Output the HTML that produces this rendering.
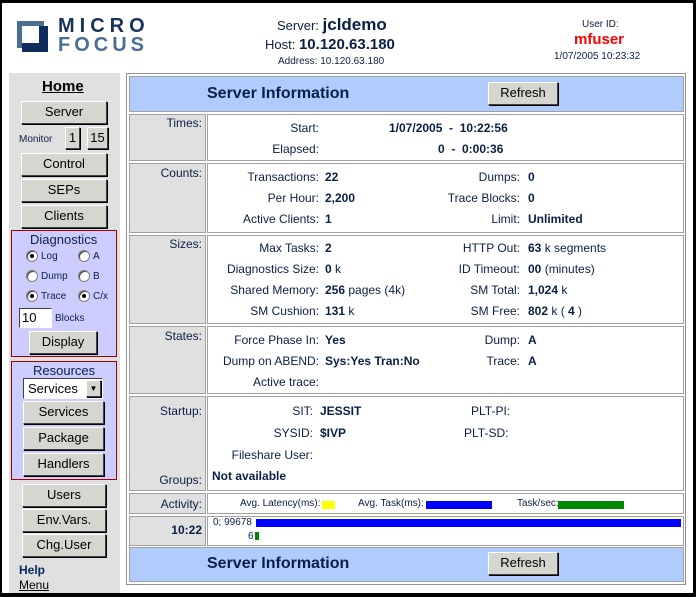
<!DOCTYPE html>
<html><head><meta charset="utf-8"><style>
*{margin:0;padding:0;box-sizing:border-box}
body{width:696px;height:597px;background:#000;position:relative;overflow:hidden;font-family:"Liberation Sans",Arial,sans-serif;color:#0a1f44;font-size:12px}
.pg{position:absolute;left:2px;top:3px;width:691px;height:590px;background:#fff}
.a{position:absolute;white-space:nowrap;line-height:14px}
.r{text-align:right}
.b{font-weight:bold}
.box{position:absolute}
.btn{position:absolute;background:#d6d6d0;border:1px solid;border-color:#fff #404040 #404040 #fff;box-shadow:1px 1px 0 #000;font-size:13px;color:#000;text-align:center;line-height:20px}
.lab{position:absolute;background:#e0e0e0;border:1px solid #a0a0a0}
.val{position:absolute;background:#fff;border:1px solid #a0a0a0}
.rad{position:absolute;width:12px;height:12px;border-radius:50%;background:#fff;border:1px solid #808080;box-shadow:inset 1px 1px 0 #404040}
.rad.on:after{content:"";position:absolute;left:3px;top:3px;width:4px;height:4px;background:#000;border-radius:50%}
.sm{font-size:10px}
</style></head><body>
<div class="pg"></div>
<!-- logo -->
<div class="box" style="left:17px;top:21px;width:27px;height:27px;background:#4a6f92"></div>
<div class="box" style="left:22px;top:26px;width:26px;height:26px;background:#0d2d5a"></div>
<div class="box" style="left:22px;top:26px;width:17px;height:17px;background:#fff"></div>
<div class="a b" style="left:58px;top:16px;font-size:20px;line-height:20px;letter-spacing:5px;color:#17335c">MICRO</div>
<div class="a b" style="left:58px;top:35px;font-size:20px;line-height:20px;letter-spacing:4px;color:#4a6f92">FOCUS</div>
<!-- header center -->
<div class="a" style="left:277px;top:16px;font-size:13px;line-height:18px">Server: <b style="font-size:17px">jcldemo</b></div>
<div class="a" style="left:265px;top:36px;font-size:13px;line-height:18px">Host: <b style="font-size:15px">10.120.63.180</b></div>
<div class="a sm" style="left:278px;top:55px">Address: 10.120.63.180</div>
<div class="a sm" style="left:582px;top:18px">User ID:</div>
<div class="a b" style="left:574px;top:31px;font-size:15px;line-height:18px;color:#f00">mfuser</div>
<div class="a sm" style="left:554px;top:50px">1/07/2005 10:23:32</div>
<!-- sidebar -->
<div class="box" style="left:9px;top:73px;width:111px;height:520px;background:#e0e0e0"></div>
<div class="a b" style="left:42px;top:78px;font-size:15px;line-height:18px;text-decoration:underline;color:#000">Home</div>
<div class="btn" style="left:21px;top:101px;width:86px;height:23px">Server</div>
<div class="a" style="left:19px;top:133px;font-size:10px">Monitor</div>
<div class="btn" style="left:65px;top:127px;width:15px;height:22px">1</div>
<div class="btn" style="left:87px;top:127px;width:21px;height:22px">15</div>
<div class="btn" style="left:21px;top:153px;width:86px;height:23px">Control</div>
<div class="btn" style="left:21px;top:179px;width:86px;height:23px">SEPs</div>
<div class="btn" style="left:21px;top:205px;width:86px;height:23px">Clients</div>
<div class="box" style="left:11px;top:230px;width:106px;height:127px;background:#ccccff;border:1px solid #a00000"></div>
<div class="a" style="left:30px;top:233px;font-size:13px">Diagnostics</div>
<div class="rad on" style="left:26px;top:250px"></div><div class="a sm" style="left:41px;top:250px">Log</div>
<div class="rad" style="left:78px;top:250px"></div><div class="a sm" style="left:93px;top:250px">A</div>
<div class="rad" style="left:26px;top:270px"></div><div class="a sm" style="left:41px;top:270px">Dump</div>
<div class="rad" style="left:78px;top:270px"></div><div class="a sm" style="left:93px;top:270px">B</div>
<div class="rad on" style="left:26px;top:290px"></div><div class="a sm" style="left:41px;top:290px">Trace</div>
<div class="rad on" style="left:78px;top:290px"></div><div class="a sm" style="left:93px;top:290px">C/x</div>
<div class="box" style="left:19px;top:308px;width:33px;height:20px;background:#fff;border:1px solid;border-color:#404040 #fff #fff #404040;font-size:13px;line-height:18px;padding-left:2px;color:#000">10</div>
<div class="a sm" style="left:55px;top:312px">Blocks</div>
<div class="btn" style="left:29px;top:331px;width:68px;height:23px">Display</div>
<div class="box" style="left:11px;top:361px;width:106px;height:119px;background:#ccccff;border:1px solid #a00000"></div>
<div class="a" style="left:33px;top:364px;font-size:13px">Resources</div>
<div class="box" style="left:23px;top:378px;width:80px;height:21px;background:#fff;border:1px solid;border-color:#404040 #fff #fff #404040;font-size:13px;line-height:19px;padding-left:4px;color:#000">Services</div>
<div class="btn" style="left:86px;top:380px;width:15px;height:17px;font-size:8px;line-height:15px">▼</div>
<div class="btn" style="left:23px;top:401px;width:81px;height:23px">Services</div>
<div class="btn" style="left:23px;top:427px;width:81px;height:23px">Package</div>
<div class="btn" style="left:23px;top:453px;width:81px;height:23px">Handlers</div>
<div class="btn" style="left:22px;top:484px;width:84px;height:23px">Users</div>
<div class="btn" style="left:22px;top:509px;width:84px;height:23px">Env.Vars.</div>
<div class="btn" style="left:22px;top:534px;width:84px;height:23px">Chg.User</div>
<div class="a b" style="left:19px;top:563px;color:#0a2a66">Help</div>
<div class="a" style="left:19px;top:578px;text-decoration:underline;color:#000">Menu</div>
<!-- main -->
<div class="box" style="left:126px;top:73px;width:560px;height:512px;border:1px solid #909090;background:#fff"></div>
<div class="box" style="left:129px;top:76px;width:555px;height:36px;background:#b0ccff;border:1px solid #a0a0a0"></div>
<div class="a b" style="left:207px;top:85px;font-size:16px;line-height:18px">Server Information</div>
<div class="btn" style="left:488px;top:82px;width:70px;height:23px">Refresh</div>
<!-- rows -->
<div class="lab" style="left:129px;top:114px;width:77px;height:47px"></div><div class="val" style="left:207px;top:114px;width:477px;height:47px"></div>
<div class="lab" style="left:129px;top:163px;width:77px;height:70px"></div><div class="val" style="left:207px;top:163px;width:477px;height:70px"></div>
<div class="lab" style="left:129px;top:235px;width:77px;height:89px"></div><div class="val" style="left:207px;top:235px;width:477px;height:89px"></div>
<div class="lab" style="left:129px;top:326px;width:77px;height:68px"></div><div class="val" style="left:207px;top:326px;width:477px;height:68px"></div>
<div class="lab" style="left:129px;top:396px;width:77px;height:95px"></div><div class="val" style="left:207px;top:396px;width:477px;height:95px"></div>
<div class="lab" style="left:129px;top:493px;width:77px;height:21px"></div><div class="val" style="left:207px;top:493px;width:477px;height:21px"></div>
<div class="lab" style="left:129px;top:516px;width:77px;height:30px"></div><div class="val" style="left:207px;top:516px;width:477px;height:30px"></div>
<div class="box" style="left:129px;top:547px;width:555px;height:35px;background:#b0ccff;border:1px solid #a0a0a0"></div>
<div class="a b" style="left:207px;top:555px;font-size:16px;line-height:18px">Server Information</div>
<div class="btn" style="left:488px;top:552px;width:70px;height:23px">Refresh</div>
<!-- labels -->
<div class="a r" style="left:130px;width:72px;top:116px">Times:</div>
<div class="a r" style="left:130px;width:72px;top:166px">Counts:</div>
<div class="a r" style="left:130px;width:72px;top:237px">Sizes:</div>
<div class="a r" style="left:130px;width:72px;top:329px">States:</div>
<div class="a r" style="left:130px;width:72px;top:404px">Startup:</div>
<div class="a r" style="left:130px;width:72px;top:473px">Groups:</div>
<div class="a r" style="left:130px;width:72px;top:497px">Activity:</div>
<div class="a r b" style="left:130px;width:72px;top:523px">10:22</div>
<!-- values -->
<div class="a r" style="left:200px;width:119px;top:121px">Start:</div>
<div class="a b" style="left:389px;top:121px">1/07/2005 &nbsp;- &nbsp;10:22:56</div>
<div class="a r" style="left:200px;width:119px;top:142px">Elapsed:</div>
<div class="a b" style="left:438px;top:142px">0 &nbsp;- &nbsp;0:00:36</div>

<div class="a r" style="left:200px;width:119px;top:170px">Transactions:</div><div class="a b" style="left:325px;top:170px">22</div>
<div class="a r" style="left:400px;width:120px;top:170px">Dumps:</div><div class="a b" style="left:528px;top:170px">0</div>
<div class="a r" style="left:200px;width:119px;top:191px">Per Hour:</div><div class="a b" style="left:325px;top:191px">2,200</div>
<div class="a r" style="left:400px;width:120px;top:191px">Trace Blocks:</div><div class="a b" style="left:528px;top:191px">0</div>
<div class="a r" style="left:200px;width:119px;top:212px">Active Clients:</div><div class="a b" style="left:325px;top:212px">1</div>
<div class="a r" style="left:400px;width:120px;top:212px">Limit:</div><div class="a b" style="left:528px;top:212px">Unlimited</div>

<div class="a r" style="left:200px;width:119px;top:241px">Max Tasks:</div><div class="a" style="left:325px;top:241px"><b>2</b></div>
<div class="a r" style="left:400px;width:120px;top:241px">HTTP Out:</div><div class="a" style="left:528px;top:241px"><b>63</b> k segments</div>
<div class="a r" style="left:200px;width:119px;top:262px">Diagnostics Size:</div><div class="a" style="left:325px;top:262px"><b>0</b> k</div>
<div class="a r" style="left:400px;width:120px;top:262px">ID Timeout:</div><div class="a" style="left:528px;top:262px"><b>00</b> (minutes)</div>
<div class="a r" style="left:200px;width:119px;top:283px">Shared Memory:</div><div class="a" style="left:325px;top:283px"><b>256</b> pages (4k)</div>
<div class="a r" style="left:400px;width:120px;top:283px">SM Total:</div><div class="a" style="left:528px;top:283px"><b>1,024</b> k</div>
<div class="a r" style="left:200px;width:119px;top:304px">SM Cushion:</div><div class="a" style="left:325px;top:304px"><b>131</b> k</div>
<div class="a r" style="left:400px;width:120px;top:304px">SM Free:</div><div class="a" style="left:528px;top:304px"><b>802</b> k ( <b>4</b> )</div>

<div class="a r" style="left:200px;width:119px;top:333px">Force Phase In:</div><div class="a b" style="left:325px;top:333px">Yes</div>
<div class="a r" style="left:400px;width:120px;top:333px">Dump:</div><div class="a b" style="left:528px;top:333px">A</div>
<div class="a r" style="left:200px;width:119px;top:354px">Dump on ABEND:</div><div class="a b" style="left:325px;top:354px">Sys:Yes Tran:No</div>
<div class="a r" style="left:400px;width:120px;top:354px">Trace:</div><div class="a b" style="left:528px;top:354px">A</div>
<div class="a r" style="left:200px;width:119px;top:375px">Active trace:</div>

<div class="a r" style="left:200px;width:113px;top:404px">SIT:</div><div class="a b" style="left:320px;top:404px">JESSIT</div>
<div class="a" style="left:471px;top:404px">PLT-PI:</div>
<div class="a r" style="left:200px;width:113px;top:426px">SYSID:</div><div class="a b" style="left:320px;top:426px">$IVP</div>
<div class="a" style="left:464px;top:426px">PLT-SD:</div>
<div class="a r" style="left:200px;width:113px;top:448px">Fileshare User:</div>
<div class="a b" style="left:212px;top:469px">Not available</div>

<div class="a sm" style="left:240px;top:497px">Avg. Latency(ms):</div>
<div class="box" style="left:322px;top:501px;width:13px;height:8px;background:#ff0"></div>
<div class="a sm" style="left:358px;top:497px">Avg. Task(ms):</div>
<div class="box" style="left:426px;top:501px;width:66px;height:8px;background:#00f"></div>
<div class="a sm" style="left:517px;top:497px">Task/sec:</div>
<div class="box" style="left:558px;top:501px;width:66px;height:8px;background:#080"></div>

<div class="a sm" style="left:213px;top:516px">0; 99678</div>
<div class="box" style="left:256px;top:519px;width:425px;height:8px;background:#00f"></div>
<div class="a sm" style="left:248px;top:530px">6</div>
<div class="box" style="left:255px;top:532px;width:4px;height:8px;background:#080"></div>
</body></html>
